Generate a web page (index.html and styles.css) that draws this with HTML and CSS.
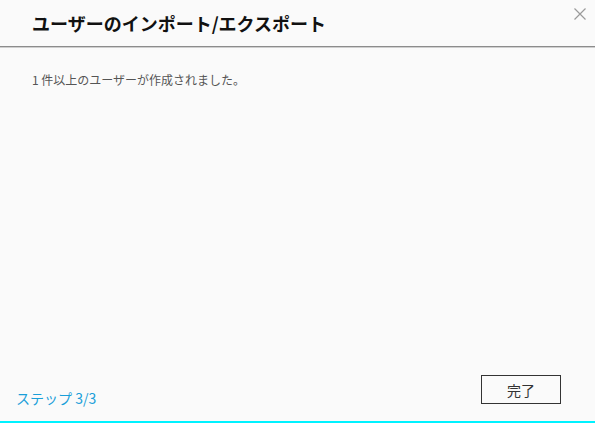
FILE: index.html
```html
<!DOCTYPE html>
<html lang="ja">
<head>
<meta charset="utf-8">
<link rel="stylesheet" href="styles.css">
</head>
<body>
<div class="dialog">
  <div class="header">
    <h1 class="title">ユーザーのインポート/エクスポート</h1>
    <button class="close" aria-label="閉じる">
      <svg width="12" height="12" viewBox="0 0 12 12"><path d="M0.5 0.5 L11.5 11.5 M11.5 0.5 L0.5 11.5" stroke="#9a9a9a" stroke-width="1.2" fill="none"/></svg>
    </button>
  </div>
  <div class="content">
    <p class="message">1 件以上のユーザーが作成されました。</p>
  </div>
  <div class="footer">
    <span class="step">ステップ 3/3</span>
    <button class="done">完了</button>
  </div>
</div>
</body>
</html>
```
FILE: styles.css
```css
html, body {
  margin: 0;
  padding: 0;
}
body {
  width: 595px;
  height: 423px;
  overflow: hidden;
  background: #fafafa;
  font-family: "Noto Sans CJK JP", "Noto Sans", sans-serif;
}
.dialog {
  width: 595px;
  height: 423px;
  box-sizing: border-box;
  display: flex;
  flex-direction: column;
  background: #fafafa;
  border-bottom: 2px solid #00f2ff;
}
.header {
  height: 46px;
  flex: none;
  display: flex;
  justify-content: space-between;
  align-items: center;
  padding: 0 9px 0 32px;
  border-bottom: 1px solid #8c8c8c;
  box-shadow: 0 1px 0 #cfcfcf;
}
.title {
  margin: 0;
  font-size: 18px;
  font-weight: bold;
  color: #111;
  line-height: 24px;
}
.close {
  align-self: flex-start;
  margin-top: 8px;
  padding: 0;
  border: 0;
  background: none;
  width: 12px;
  height: 12px;
  display: flex;
}
.content {
  flex: 1;
  padding: 25px 32px 0;
}
.message {
  margin: 0;
  font-size: 12px;
  line-height: 16px;
  color: #555;
}
.footer {
  display: flex;
  justify-content: space-between;
  align-items: flex-end;
  padding: 0 34px 17px 16px;
}
.step {
  font-size: 14px;
  line-height: 12px;
  color: #1a9fd9;
}
.done {
  width: 80px;
  height: 29px;
  box-sizing: border-box;
  border: 1px solid #333;
  background: #fafafa;
  font-family: "Noto Sans CJK JP", sans-serif;
  font-size: 14px;
  color: #333;
  padding: 0;
}
```
